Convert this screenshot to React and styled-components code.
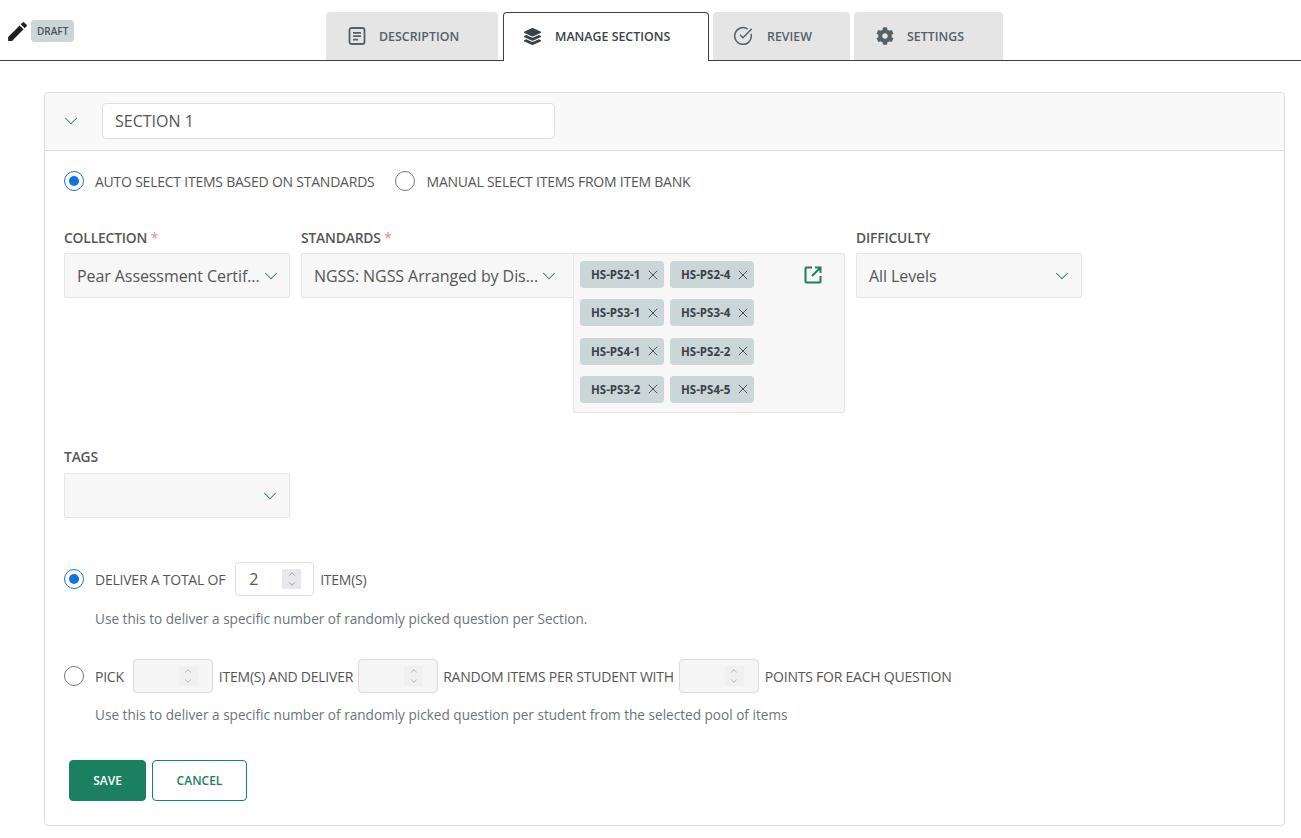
import styled, { createGlobalStyle } from "styled-components";
import { ChevronDown, ChevronUp, X, CircleCheckBig } from "lucide-react";
import { FaLayerGroup, FaCog } from "react-icons/fa";
import { MdEdit } from "react-icons/md";

const GlobalStyle = createGlobalStyle`
  * { box-sizing: border-box; }
  body {
    margin: 0;
    background: #fff;
    font-family: "Open Sans", "Liberation Sans", sans-serif;
    color: #555;
  }
`;

const green = "#1a8060";

const Header = styled.header`
  height: 61px;
  border-bottom: 1px solid #3a4248;
  display: flex;
  align-items: flex-end;
`;

const Status = styled.div`
  width: 326px;
  align-self: flex-start;
  display: flex;
  align-items: flex-start;
  padding: 19px 0 0 5px;
  color: #1f1f1f;
`;

const DraftBadge = styled.span`
  height: 22px;
  margin: 1px 0 0 1px;
  padding: 0 6px;
  background: #ccd6d9;
  border-radius: 4px;
  font-size: 10px;
  font-weight: 600;
  line-height: 22px;
  color: #49545a;
`;

const Tabs = styled.nav`
  display: flex;
  gap: 4px;
`;

const Tab = styled.div`
  width: ${({ $width }) => $width}px;
  height: ${({ $active }) => ($active ? 49 : 48)}px;
  margin-bottom: ${({ $active }) => ($active ? -1 : 0)}px;
  margin-left: ${({ $active }) => ($active ? 1 : 0)}px;
  padding: ${({ $active }) => ($active ? "0 0 2px" : "0")};
  padding-left: ${({ $pad }) => $pad}px;
  display: flex;
  align-items: center;
  background: ${({ $active }) => ($active ? "#fff" : "#e5e5e5")};
  border: ${({ $active }) => ($active ? "1px solid #3a4248" : "none")};
  border-bottom: none;
  border-radius: 4px 4px 0 0;
  font-size: 12.4px;
  font-weight: 600;
  color: ${({ $active }) => ($active ? "#3a4248" : "#566068")};
`;

const TabIcon = styled.span`
  width: ${({ $box }) => $box}px;
  display: flex;
  align-items: center;
`;

const Card = styled.section`
  margin: 31px 16px 0 44px;
  height: 734px;
  border: 1px solid #dcdcdc;
  border-radius: 4px;
`;

const CardHead = styled.div`
  height: 58px;
  display: flex;
  align-items: center;
  padding: 0 0 1px 15px;
  background: #f9f9f9;
  border-bottom: 1px solid #dcdcdc;
  border-radius: 4px 4px 0 0;
  color: ${green};
`;

const SectionName = styled.input`
  width: 453px;
  height: 36px;
  margin-left: 20px;
  padding: 0 12px;
  background: #fff;
  border: 1px solid #dfdfdf;
  border-radius: 4px;
  outline: none;
  font-family: inherit;
  font-size: 16px;
  color: #555;
`;

const CardBody = styled.div`
  padding: 20px 0 0 19px;
`;

const RadioRow = styled.div`
  display: flex;
  align-items: center;
  height: 20px;
`;

const Radio = styled.span`
  flex: none;
  width: 20px;
  height: 20px;
  margin-left: ${({ $left }) => $left ?? 0}px;
  margin-right: ${({ $gap }) => $gap ?? 11}px;
  border-radius: 50%;
  background: #fff;
  border: 1px solid ${({ $on }) => ($on ? "#1b72d0" : "#777")};
  display: flex;
  align-items: center;
  justify-content: center;

  &::after {
    content: "";
    display: ${({ $on }) => ($on ? "block" : "none")};
    width: 10px;
    height: 10px;
    border-radius: 50%;
    background: #1273de;
  }
`;

const RadioText = styled.span`
  font-size: 14px;
  letter-spacing: -0.23px;
  color: #555;
  white-space: nowrap;
`;

const FieldRow = styled.div`
  display: flex;
  align-items: flex-start;
  gap: 11px;
  margin-top: 37px;
`;

const Field = styled.div`
  width: ${({ $width }) => $width}px;
`;

const FieldLabel = styled.label`
  display: block;
  height: ${({ $height }) => $height ?? 25}px;
  line-height: 20px;
  font-size: 13.8px;
  font-weight: 600;
  letter-spacing: -0.15px;
  color: #555;

  em {
    font-style: normal;
    font-weight: 400;
    color: #e58a92;
  }
`;

const Select = styled.div`
  height: 45px;
  width: ${({ $width }) => ($width ? `${$width}px` : "100%")};
  flex: none;
  display: flex;
  align-items: center;
  justify-content: space-between;
  padding: 0 ${({ $right }) => $right ?? 8}px 0 12px;
  background: #f7f7f7;
  border: 1px solid #e6e6e6;
  border-radius: 2px;
  font-size: 16px;
  letter-spacing: -0.08px;
  color: #555;
  white-space: nowrap;

  svg {
    flex: none;
    color: ${green};
  }
`;

const StandardsBody = styled.div`
  display: flex;
  align-items: flex-start;
`;

const ChipBox = styled.div`
  width: 272px;
  height: 160px;
  margin-left: -1px;
  padding: 7px 21px 0 6px;
  display: flex;
  justify-content: space-between;
  background: #f7f7f7;
  border: 1px solid #e6e6e6;
  border-radius: 2px;
`;

const ChipGrid = styled.div`
  display: grid;
  grid-template-columns: 84px 84px;
  grid-auto-rows: 27px;
  column-gap: 6px;
  row-gap: 11.3px;
`;

const Chip = styled.span`
  display: flex;
  align-items: center;
  justify-content: space-between;
  padding: 0 3px 0 11px;
  background: #cbd6d9;
  border-radius: 4px;
  font-size: 11.5px;
  font-weight: 700;
  color: #3a4248;

  svg {
    color: #3a4248;
  }
`;

const OpenLink = styled.svg`
  margin-top: 4px;
  color: ${green};
`;

const TagsField = styled(Field)`
  margin-top: 34px;
`;

const DeliverRow = styled.div`
  display: flex;
  align-items: center;
  height: 34px;
  margin-top: ${({ $top }) => $top}px;
`;

const InlineText = styled.span`
  margin: 0 ${({ $right }) => $right ?? 6}px 0 ${({ $left }) => $left ?? 6}px;
  font-size: 14px;
  letter-spacing: -0.23px;
  color: #555;
  white-space: nowrap;
`;

const NumberBox = styled.div`
  flex: none;
  width: ${({ $width }) => $width ?? 80}px;
  height: 34px;
  padding: 0 4px 0 13px;
  display: flex;
  align-items: center;
  justify-content: space-between;
  background: ${({ $disabled }) => ($disabled ? "#f5f5f5" : "#fff")};
  border: 1px solid ${({ $disabled }) => ($disabled ? "#dcdcdc" : "#dfdfdf")};
  border-radius: 4px;
  font-size: 16px;
  color: #555;
`;

const Spinner = styled.span`
  width: 19px;
  height: 20px;
  margin-right: ${({ $disabled }) => ($disabled ? 10 : 8)}px;
  display: flex;
  flex-direction: column;
  align-items: center;
  justify-content: center;
  background: ${({ $disabled }) => ($disabled ? "#f0f0f0" : "#e7e7ec")};
  color: ${({ $disabled }) => ($disabled ? "#a8a8a8" : "#8a8a8a")};
`;

const HelpText = styled.p`
  margin: ${({ $top }) => $top}px 0 0 31px;
  font-size: 13.6px;
  line-height: 20px;
  color: #6b747a;
`;

const Actions = styled.div`
  display: flex;
  gap: 6px;
  margin: 35px 0 0 5px;
`;

const Button = styled.button`
  height: 41px;
  width: ${({ $width }) => $width}px;
  background: ${({ $primary }) => ($primary ? green : "#fff")};
  color: ${({ $primary }) => ($primary ? "#fff" : green)};
  border: 1px solid ${green};
  border-radius: 4px;
  font-family: inherit;
  font-size: 12px;
  font-weight: 600;
`;

const TABS = [
  { label: "DESCRIPTION", width: 172, pad: 21, box: 32, icon: <DescriptionIcon /> },
  { label: "MANAGE SECTIONS", width: 206, pad: 20, box: 31, active: true, icon: <FaLayerGroup size={17} color="#3a4248" /> },
  { label: "REVIEW", width: 137, pad: 20, box: 34, icon: <CircleCheckBig size={20} strokeWidth={1.8} color="#566068" /> },
  { label: "SETTINGS", width: 149, pad: 22, box: 31, icon: <FaCog size={18} color="#566068" /> },
];

const CHIPS = [
  "HS-PS2-1", "HS-PS2-4", "HS-PS3-1", "HS-PS3-4",
  "HS-PS4-1", "HS-PS2-2", "HS-PS3-2", "HS-PS4-5",
];

function DescriptionIcon() {
  return (
    <svg width="20" height="20" viewBox="0 0 20 20" fill="none" stroke="#566068" strokeWidth="1.8">
      <rect x="2.5" y="2" width="15" height="16" rx="2" />
      <path d="M6 6.8h8M6 10.2h8M6 13.6h5" />
    </svg>
  );
}

function Chevron() {
  return <ChevronDown size={22} strokeWidth={1.15} />;
}

function NumberInput({ value, disabled, width }) {
  return (
    <NumberBox $disabled={disabled} $width={width}>
      <span>{value}</span>
      <Spinner $disabled={disabled}>
        <ChevronUp size={12} />
        <ChevronDown size={12} />
      </Spinner>
    </NumberBox>
  );
}

export default function App() {
  return (
    <>
      <GlobalStyle />
      <Header>
        <Status>
          <MdEdit size={25} />
          <DraftBadge>DRAFT</DraftBadge>
        </Status>
        <Tabs>
          {TABS.map((tab) => (
            <Tab key={tab.label} $width={tab.width} $pad={tab.pad} $active={tab.active}>
              <TabIcon $box={tab.box}>{tab.icon}</TabIcon>
              {tab.label}
            </Tab>
          ))}
        </Tabs>
      </Header>

      <Card>
        <CardHead>
          <Chevron />
          <SectionName readOnly value="SECTION 1" />
        </CardHead>
        <CardBody>
          <RadioRow>
            <Radio $on />
            <RadioText>AUTO SELECT ITEMS BASED ON STANDARDS</RadioText>
            <Radio $left={20} $gap={12} />
            <RadioText>MANUAL SELECT ITEMS FROM ITEM BANK</RadioText>
          </RadioRow>

          <FieldRow>
            <Field $width={226}>
              <FieldLabel>COLLECTION <em>*</em></FieldLabel>
              <Select>
                Pear Assessment Certif...
                <Chevron />
              </Select>
            </Field>
            <Field $width={544}>
              <FieldLabel>STANDARDS <em>*</em></FieldLabel>
              <StandardsBody>
                <Select $width={273} $right={14}>
                  NGSS: NGSS Arranged by Dis...
                  <Chevron />
                </Select>
                <ChipBox>
                  <ChipGrid>
                    {CHIPS.map((code) => (
                      <Chip key={code}>
                        {code}
                        <X size={16} strokeWidth={1.3} />
                      </Chip>
                    ))}
                  </ChipGrid>
                  <OpenLink width="20" height="20" viewBox="0 0 20 20" fill="none" stroke="currentColor" strokeWidth="2">
                    <path d="M9 2.5H3.5a1 1 0 0 0-1 1v13a1 1 0 0 0 1 1h13a1 1 0 0 0 1-1V11M12 2.5h5.5V8M17.5 2.5L9 11" />
                  </OpenLink>
                </ChipBox>
              </StandardsBody>
            </Field>
            <Field $width={226}>
              <FieldLabel>DIFFICULTY</FieldLabel>
              <Select>
                All Levels
                <Chevron />
              </Select>
            </Field>
          </FieldRow>

          <TagsField $width={226}>
            <FieldLabel $height={26}>TAGS</FieldLabel>
            <Select>
              <span />
              <Chevron />
            </Select>
          </TagsField>

          <DeliverRow $top={44}>
            <Radio $on />
            <InlineText $left={0} $right={10}>DELIVER A TOTAL OF</InlineText>
            <NumberInput value="2" width={79} />
            <InlineText>ITEM(S)</InlineText>
          </DeliverRow>
          <HelpText $top={13}>Use this to deliver a specific number of randomly picked question per Section.</HelpText>

          <DeliverRow $top={30}>
            <Radio />
            <InlineText $left={0} $right={9}>PICK</InlineText>
            <NumberInput disabled />
            <InlineText $right={5}>ITEM(S) AND DELIVER</InlineText>
            <NumberInput disabled />
            <InlineText $left={5} $right={5}>RANDOM ITEMS PER STUDENT WITH</InlineText>
            <NumberInput disabled />
            <InlineText>POINTS FOR EACH QUESTION</InlineText>
          </DeliverRow>
          <HelpText $top={12}>Use this to deliver a specific number of randomly picked question per student from the selected pool of items</HelpText>

          <Actions>
            <Button $primary $width={77}>SAVE</Button>
            <Button $width={95}>CANCEL</Button>
          </Actions>
        </CardBody>
      </Card>
    </>
  );
}
